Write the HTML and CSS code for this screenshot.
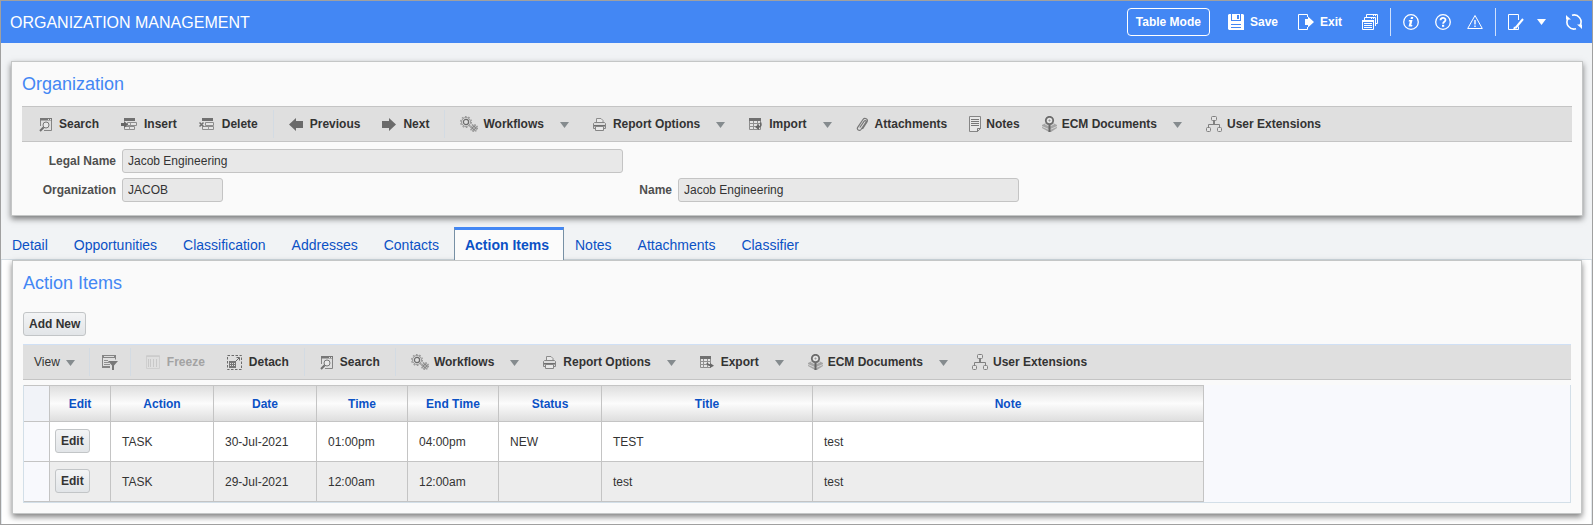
FILE: index.html
```html
<!DOCTYPE html>
<html lang="en">
<head>
    <meta charset="UTF-8">
    <meta name="viewport" content="width=device-width, initial-scale=1.0">
    <title>Organization Management</title>
    <link rel="stylesheet" href="styles.css">
</head>
<body>
    <!-- icon sprite -->
    <svg class="sprite" aria-hidden="true">
        <symbol id="i-search" viewBox="0 0 13 15">
            <path d="M1.5 9V1.5h11v12H5" fill="none" stroke="#858585"/>
            <path d="M1 1h12v2.500H1z" fill="#777"/>
            <path d="M9 2h1v1H9zM11 2h1v1h-1z" fill="#e0e0e0"/>
            <circle cx="7" cy="8" r="3" fill="#e8e8e8" stroke="#777"/>
            <path d="M4.700 10.300L1 14" stroke="#707070" stroke-width="2"/>
        </symbol>
        <symbol id="i-insert" viewBox="0 0 16 14">
            <path d="M3 1h11v3H3z" fill="#707070"/>
            <path d="M6.500 5.500h9v3h-9zM3.500 9.500h10v3h-10z" fill="#e4e4e4" stroke="#8c8c8c"/>
            <path d="M9.500 5.500v3M8.500 9.500v3" stroke="#999"/>
            <path d="M0 6h3V4l4 3.500L3 11V9H0z" fill="#666"/>
        </symbol>
        <symbol id="i-delete" viewBox="0 0 16 14">
            <path d="M3 1h11v3H3z" fill="#707070"/>
            <path d="M6.500 5.500h8v3h-8zM3.500 9.500h11v3h-11z" fill="#e4e4e4" stroke="#8c8c8c"/>
            <path d="M9.500 9.500v3" stroke="#999"/>
            <path d="M.500 5.500l4 4M4.500 5.500l-4 4" stroke="#707070" stroke-width="1.500"/>
        </symbol>
        <symbol id="i-prev" viewBox="0 0 14 13"><path d="M0 6.500L7 0v3h7v7H7v3z" fill="#6b6b6b"/></symbol>
        <symbol id="i-next" viewBox="0 0 14 13"><path d="M14 6.500L7 0v3H0v7h7v3z" fill="#6b6b6b"/></symbol>
        <symbol id="i-gears" viewBox="0 0 18 16">
            <g fill="none" stroke="#999">
                <circle cx="6" cy="6" r="5.400" stroke-width="1.200" stroke-dasharray="1.700 1.690"/>
                <circle cx="6" cy="6" r="4.500"/>
                <circle cx="6" cy="6" r="2.600" stroke="#6b6b6b" stroke-width="1.200"/>
                <circle cx="14" cy="12" r="3.500" stroke-width="1.200" stroke-dasharray="1.400 1.350"/>
                <circle cx="14" cy="12" r="2.800"/>
                <circle cx="14" cy="12" r="1.400" stroke="#6b6b6b"/>
            </g>
        </symbol>
        <symbol id="i-print" viewBox="0 0 13 14">
            <path d="M3.500 5.500V1.500h4.500l2 2V5.500" fill="#e8e8e8" stroke="#8c8c8c"/>
            <path d="M.500 6.500l1-1h10l1 1v5H.500z" fill="#dcdcdc" stroke="#858585"/>
            <path d="M1 8h11v1.500H1z" fill="#707070"/>
            <path d="M2.500 9.500h8v4h-8z" fill="#e8e8e8" stroke="#858585"/>
        </symbol>
        <symbol id="i-import" viewBox="0 0 13 14">
            <path d="M.5 1.500h11v11H.5z" fill="#e4e4e4" stroke="#8c8c8c"/>
            <path d="M0 1h12v3H0z" fill="#707070"/>
            <path d="M4.500 4v9M8.500 4v9M0 6.500h12M0 9.500h12" stroke="#909090"/>
            <path d="M11.500 5.500c1 3 0 4.500-2.500 4.500" fill="none" stroke="#666" stroke-width="1.600"/>
            <path d="M6 10l4-3v6z" fill="#666"/>
        </symbol>
        <symbol id="i-export" viewBox="0 0 14 14">
            <path d="M.5 1.500h10v11H.5z" fill="#e4e4e4" stroke="#8c8c8c"/>
            <path d="M0 1h11v3H0z" fill="#707070"/>
            <path d="M3.500 4v9M7.500 4v9M0 6.500h11M0 9.500h11" stroke="#909090"/>
            <path d="M7 8c1 2 2 2.500 4 2.500" fill="none" stroke="#666" stroke-width="1.600"/>
            <path d="M10 8l4 2.800-4 2.200z" fill="#666"/>
        </symbol>
        <symbol id="i-clip" viewBox="0 0 12 15">
            <path d="M3.800 10.500L8.200 4.200c1-1.400 2.600-.2 1.700 1.100L5 12.500c-1.500 2-4.800.2-3.300-2.200L7 2.500C8.600.2 12.600 2 11 5L6.500 12" fill="none" stroke="#777" stroke-width="1.200"/>
        </symbol>
        <symbol id="i-notes" viewBox="0 0 12 16">
            <path d="M.5.5h11v12l-3 3h-8z" fill="#e8e8e8" stroke="#858585"/>
            <path d="M2 3.500h8M2 5.500h8M2 7.500h8M2 9.500h8" stroke="#777"/>
            <path d="M8.500 15.500v-3h3" fill="none" stroke="#777"/>
        </symbol>
        <symbol id="i-ecm" viewBox="0 0 15 16">
            <path d="M0 9l4-2 3.500 2.500L11 7l4 2v3l-6 4H7l-7-4z" fill="#a5a5a5"/>
            <path d="M0 10.500l7 3M15 10.500l-7 3M3 8l4 2M12 8l-4 2" stroke="#d4d4d4"/>
            <path d="M7.500 8v8" stroke="#666" stroke-width="2"/>
            <circle cx="7.500" cy="4.500" r="3.700" fill="#e4e4e4" stroke="#6b6b6b" stroke-width="1.800"/>
            <path d="M7.500 3.500v2M6.500 4.500h2" stroke="#999"/>
        </symbol>
        <symbol id="i-tree" viewBox="0 0 16 16">
            <g fill="#e4e4e4" stroke="#808080">
                <path d="M8 5v3.500" stroke-width="2"/>
                <path d="M2.500 12V8.500h11V12" fill="none"/>
                <rect x="5.500" y=".5" width="5" height="4" rx="1"/>
                <rect x=".5" y="11.500" width="4" height="4" rx="1"/>
                <rect x="11.500" y="11.500" width="4" height="4" rx="1"/>
            </g>
        </symbol>
        <symbol id="i-caret" viewBox="0 0 9 6"><path d="M0 0h9L4.500 6z" fill="currentColor"/></symbol>
        <symbol id="i-filter" viewBox="0 0 16 15">
            <path d="M.5 .5h13v4M.5 .5v12H8" fill="none" stroke="#858585"/>
            <path d="M0 0h14v3H0zM0 11h8v2H0z" fill="#858585"/>
            <path d="M2 1.500h10" stroke="#ddd"/>
            <path d="M2 5.500h4M2 7.500h5M2 9.500h6" stroke="#909090"/>
            <path d="M6 6h10l-4 4.500V15h-2v-4.500z" fill="#777"/>
        </symbol>
        <symbol id="i-freeze" viewBox="0 0 14 14">
            <path d="M.5 .5h13v13H.5z" fill="none" stroke="#cfcfcf"/>
            <path d="M0 1.500h14" stroke="#ccc"/>
            <path d="M2.500 4v8M4.500 4v8M7.500 4v8M10.500 4v8" stroke="#c8c8c8"/>
        </symbol>
        <symbol id="i-detach" viewBox="0 0 15 15">
            <path d="M.5 .5h14v14H.5z" fill="none" stroke="#6b6b6b" stroke-dasharray="2.500 1.500"/>
            <path d="M2 6h7v7H2z" fill="#777"/>
            <path d="M3 8.500h5M3 10.500h5" stroke="#e0e0e0" stroke-dasharray="1 1"/>
            <path d="M8.500 6.500l3.500-3.500M9.500 2.500h3v3" fill="none" stroke="#6b6b6b"/>
        </symbol>
        <symbol id="i-save" viewBox="0 0 16 16">
            <path d="M0 1l1-1h14l1 1v15H1l-1-1z" fill="#fff"/>
            <path d="M3 0h10v7H3z" fill="#4387f4"/>
            <path d="M4 0h8v6H4z" fill="#fff"/>
            <path d="M9 1h2v4H9zM3 10h10v1H3zM3 13h10v1H3z" fill="#4387f4"/>
        </symbol>
        <symbol id="i-exit" viewBox="0 0 16 16">
            <path d="M9.500 3v-2.500H.5v15h9V13" fill="none" stroke="#fff"/>
            <path d="M7 5h3V2.500l6 5.500-6 5.500V11H7z" fill="#fff"/>
        </symbol>
        <symbol id="i-windows" viewBox="0 0 16 16">
            <path d="M4.500 3V.500h11v9H14M2.500 6V3.500h11v8.500" fill="none" stroke="#fff"/>
            <path d="M11 1h1v1h-1zM13 1h1v1h-1zM9 4h1v1H9zM11 4h1v1h-1z" fill="#fff"/>
            <path d="M.500 6.500h11v9H.500z" fill="none" stroke="#fff"/>
            <path d="M0 6h12v2H0z" fill="#fff"/>
            <path d="M2 9.500h8M2 11.500h8M2 13.500h8" stroke="#fff"/>
        </symbol>
        <symbol id="i-info" viewBox="0 0 16 16">
            <circle cx="8" cy="8" r="7.300" fill="none" stroke="#fff" stroke-width="1.300"/>
            <path d="M8 3h2.300l-.5 2H7.500zM6 6h3.500L8.300 11h1.200l-.5 1.500H5.500L6.800 7.500H5.600z" fill="#fff"/>
        </symbol>
        <symbol id="i-help" viewBox="0 0 16 16">
            <circle cx="8" cy="8" r="7.300" fill="none" stroke="#fff" stroke-width="1.300"/>
            <path d="M5.500 6.300c0-3.300 5-3.200 5-.3 0 1.800-2.400 1.700-2.400 3.700" fill="none" stroke="#fff" stroke-width="1.800"/>
            <path d="M7 10.800h2.200v2H7z" fill="#fff"/>
        </symbol>
        <symbol id="i-warn" viewBox="0 0 16 16">
            <path d="M8 1.500L15.300 14.500H.7z" fill="none" stroke="#fff"/>
            <path d="M7.300 6h1.400v4.500H7.300zM7.300 11.500h1.400V13H7.300z" fill="#fff"/>
        </symbol>
        <symbol id="i-edit" viewBox="0 0 16 16">
            <path d="M10.500 6V.5H.5v15h10v-3" fill="none" stroke="#fff"/>
            <path d="M15 5l-7.500 9" stroke="#fff" stroke-width="2"/>
            <path d="M5 16l1-3.500L8.500 14z" fill="#fff"/>
        </symbol>
        <symbol id="i-refresh" viewBox="0 0 16 16">
            <path d="M6 1.200A7 7 0 0 1 14 11.500M10 14.800A7 7 0 0 1 2 4.500" fill="none" stroke="#fff" stroke-width="1.600"/>
            <path d="M11 10.500h5V15l-1.500-1.500zM5 5.500H0V1l1.500 1.500z" fill="#fff"/>
        </symbol>
    </svg>

    <header class="app-bar">
        <h1>ORGANIZATION MANAGEMENT</h1>
        <div class="app-actions">
            <button class="mode-btn">Table Mode</button>
            <button><svg width="16" height="16"><use href="#i-save"/></svg>Save</button>
            <button><svg width="16" height="16"><use href="#i-exit"/></svg>Exit</button>
            <button class="last" aria-label="Windows"><svg width="16" height="16"><use href="#i-windows"/></svg></button>
            <span class="divider"></span>
            <button class="round" aria-label="Info"><svg width="16" height="16"><use href="#i-info"/></svg></button>
            <button class="round" aria-label="Help"><svg width="16" height="16"><use href="#i-help"/></svg></button>
            <button class="last" aria-label="Warnings"><svg width="16" height="16"><use href="#i-warn"/></svg></button>
            <span class="divider"></span>
            <button class="edit-menu" aria-label="Customize"><svg width="16" height="16"><use href="#i-edit"/></svg><svg class="caret" width="9" height="6"><use href="#i-caret"/></svg></button>
            <button aria-label="Refresh"><svg width="16" height="16"><use href="#i-refresh"/></svg></button>
        </div>
    </header>

    <main>
        <section class="panel">
            <h2>Organization</h2>
            <div class="toolbar main-toolbar">
                <button><svg width="13" height="15"><use href="#i-search"/></svg>Search</button>
                <button><svg width="16" height="14"><use href="#i-insert"/></svg>Insert</button>
                <button><svg width="16" height="14"><use href="#i-delete"/></svg>Delete</button>
                <span class="sep"></span>
                <button><svg width="14" height="13"><use href="#i-prev"/></svg>Previous</button>
                <button><svg width="14" height="13"><use href="#i-next"/></svg>Next</button>
                <span class="sep"></span>
                <button class="menu tight"><svg width="18" height="16"><use href="#i-gears"/></svg>Workflows<svg class="caret" width="9" height="6"><use href="#i-caret"/></svg></button>
                <button class="menu"><svg width="13" height="14"><use href="#i-print"/></svg>Report Options<svg class="caret" width="9" height="6"><use href="#i-caret"/></svg></button>
                <button class="menu"><svg width="13" height="14"><use href="#i-import"/></svg>Import<svg class="caret" width="9" height="6"><use href="#i-caret"/></svg></button>
                <button><svg width="12" height="15"><use href="#i-clip"/></svg>Attachments</button>
                <button class="tight"><svg width="12" height="16"><use href="#i-notes"/></svg>Notes</button>
                <button class="menu tight"><svg width="15" height="16"><use href="#i-ecm"/></svg>ECM Documents<svg class="caret" width="9" height="6"><use href="#i-caret"/></svg></button>
                <button class="tight"><svg width="16" height="16"><use href="#i-tree"/></svg>User Extensions</button>
            </div>
            <form class="fields">
                <label for="legal-name">Legal Name</label>
                <input type="text" id="legal-name" class="wide" value="Jacob Engineering" readonly>
                <label for="org-code">Organization</label>
                <input type="text" id="org-code" class="code" value="JACOB" readonly>
                <label for="org-name">Name</label>
                <input type="text" id="org-name" value="Jacob Engineering" readonly>
            </form>
        </section>

        <nav class="tabs">
            <a href="#">Detail</a>
            <a href="#">Opportunities</a>
            <a href="#">Classification</a>
            <a href="#">Addresses</a>
            <a href="#">Contacts</a>
            <a href="#" class="active">Action Items</a>
            <a href="#">Notes</a>
            <a href="#">Attachments</a>
            <a href="#">Classifier</a>
        </nav>

        <div class="tab-content">
            <section class="panel">
                <h2>Action Items</h2>
                <button class="btn add-new">Add New</button>
                <div class="toolbar table-toolbar">
                    <button class="menu view">View<svg class="caret" width="9" height="6"><use href="#i-caret"/></svg></button>
                    <span class="sep sep-near"></span>
                    <button aria-label="Query by example"><svg width="16" height="15"><use href="#i-filter"/></svg></button>
                    <span class="sep sep-near"></span>
                    <button class="freeze" disabled><svg width="14" height="14"><use href="#i-freeze"/></svg>Freeze</button>
                    <button><svg width="15" height="15"><use href="#i-detach"/></svg>Detach</button>
                    <span class="sep"></span>
                    <button><svg width="13" height="15"><use href="#i-search"/></svg>Search</button>
                    <span class="sep"></span>
                    <button class="menu tight"><svg width="18" height="16"><use href="#i-gears"/></svg>Workflows<svg class="caret" width="9" height="6"><use href="#i-caret"/></svg></button>
                    <button class="menu"><svg width="13" height="14"><use href="#i-print"/></svg>Report Options<svg class="caret" width="9" height="6"><use href="#i-caret"/></svg></button>
                    <button class="menu"><svg width="14" height="14"><use href="#i-export"/></svg>Export<svg class="caret" width="9" height="6"><use href="#i-caret"/></svg></button>
                    <button class="menu tight"><svg width="15" height="16"><use href="#i-ecm"/></svg>ECM Documents<svg class="caret" width="9" height="6"><use href="#i-caret"/></svg></button>
                    <button class="tight"><svg width="16" height="16"><use href="#i-tree"/></svg>User Extensions</button>
                </div>
                <div class="table-wrap">
                    <table>
                        <colgroup>
                            <col class="c-row"><col class="c-edit"><col class="c-mid"><col class="c-mid"><col class="c-time"><col class="c-time"><col class="c-mid"><col class="c-title"><col class="c-note">
                        </colgroup>
                        <thead>
                            <tr><td class="row-head"></td><th>Edit</th><th>Action</th><th>Date</th><th>Time</th><th>End Time</th><th>Status</th><th>Title</th><th>Note</th></tr>
                        </thead>
                        <tbody>
                            <tr>
                                <td class="row-head"></td>
                                <td class="edit-cell"><button class="btn">Edit</button></td>
                                <td>TASK</td><td>30-Jul-2021</td><td>01:00pm</td><td>04:00pm</td><td>NEW</td><td>TEST</td><td>test</td>
                            </tr>
                            <tr>
                                <td class="row-head"></td>
                                <td class="edit-cell"><button class="btn">Edit</button></td>
                                <td>TASK</td><td>29-Jul-2021</td><td>12:00am</td><td>12:00am</td><td></td><td>test</td><td>test</td>
                            </tr>
                        </tbody>
                    </table>
                </div>
            </section>
        </div>
    </main>
</body>
</html>
```
FILE: styles.css
```css
* {
    box-sizing: border-box;
}

body {
    display: flex;
    flex-direction: column;
    min-height: 100vh;
    margin: 0;
    border: 1px solid #a0a0a0;
    background-color: #f1f3f5;
    color: #333;
    font-family: "Liberation Sans", Arial, sans-serif;
    font-size: 12px;
}

button,
input {
    font-family: inherit;
    font-size: 12px;
    color: #333;
}

.sprite {
    display: none;
}

/* Top bar */
.app-bar {
    display: flex;
    justify-content: space-between;
    align-items: center;
    height: 42px;
    padding: 0 10px 0 9px;
    background-color: #4387f4;
}

.app-bar h1 {
    margin: 0;
    padding-top: 2px;
    color: #fff;
    font-size: 16px;
    font-weight: normal;
}

.app-actions {
    display: flex;
    align-items: center;
}

.app-actions button {
    display: flex;
    align-items: center;
    gap: 6px;
    margin-right: 20px;
    padding: 0;
    border: none;
    background: none;
    color: #fff;
    font-weight: bold;
    cursor: pointer;
}

.app-actions .mode-btn {
    height: 28px;
    margin-right: 18px;
    padding: 0 8px;
    border: 1px solid #fff;
    border-radius: 4px;
}

.app-actions .round {
    margin-right: 16px;
}

.app-actions .last {
    margin-right: 12px;
}

.app-actions .edit-menu {
    gap: 13px;
}

.app-actions button:last-child {
    margin-right: 0;
}

.divider {
    width: 1px;
    height: 28px;
    margin-right: 12px;
    background-color: #cfe0fc;
}

main {
    display: flex;
    flex-direction: column;
    flex: 1;
    padding-top: 18px;
}

/* Panels */
.panel {
    margin: 0 9px 0 10px;
    padding: 11px 10px 10px;
    border: 1px solid #c4c6c6;
    background-color: #fafafa;
    box-shadow: 0 3px 6px rgba(0, 0, 0, 0.5);
}

.panel h2 {
    margin: 0 0 11px;
    color: #4387f4;
    font-size: 18px;
    font-weight: normal;
    line-height: 22px;
}

/* Toolbars */
.toolbar {
    display: flex;
    align-items: center;
    height: 36px;
    border-top: 1px solid #c4c4c4;
    border-bottom: 1px solid #c4c4c4;
    background-color: #dfdfdf;
}

.main-toolbar {
    padding-left: 6px;
}

.table-toolbar {
    margin: 8px 0 5px;
    border-top-color: #d0e0f5;
}

.toolbar button {
    display: flex;
    align-items: center;
    gap: 7px;
    height: 100%;
    padding: 0 11px;
    border: none;
    background: none;
    font-weight: bold;
    white-space: nowrap;
    cursor: pointer;
}

.toolbar .tight {
    gap: 5px;
}

.toolbar .menu {
    padding-right: 13px;
}

.toolbar .caret {
    margin: 2px 0 0 9px;
    color: #858b8e;
}

.toolbar .tight .caret {
    margin-left: 11px;
}

.toolbar .view {
    gap: 6px;
    font-weight: normal;
}

.toolbar .view .caret {
    margin-left: 0;
}

.toolbar .freeze {
    padding-left: 14px;
    color: #a3a3a3;
}

.sep {
    width: 1px;
    height: 28px;
    margin: 0 4px;
    background-color: #d3dbe3;
}

.sep-near {
    margin: 0 1px;
}

/* Form fields */
.fields {
    display: grid;
    grid-template-columns: 94px 501px 43px 341px;
    gap: 5px 6px;
    align-items: center;
    margin: 7px 0 3px;
}

.fields label {
    color: #4f4f4f;
    font-weight: bold;
    text-align: right;
}

.fields input {
    width: 100%;
    height: 24px;
    padding: 0 5px;
    border: 1px solid #c4c4c4;
    border-radius: 3px;
    background-color: #e8e8e8;
}

.fields .wide {
    grid-column: 2 / 3;
}

.fields label[for="org-code"] {
    grid-column: 1;
}

.fields .code {
    width: 101px;
}

/* Tabs */
.tabs {
    display: flex;
    height: 33px;
    margin-top: 11px;
    border-bottom: 1px solid #d3dce3;
}

.tabs a {
    padding: 0 15px 0 11px;
    color: #0b51c5;
    font-size: 14px;
    line-height: 36px;
    text-decoration: none;
}

.tabs .active {
    position: relative;
    height: 33px;
    padding: 0 14px 0 10px;
    border: 1px solid #7790a5;
    border-top: 3px solid #4387f4;
    border-bottom: none;
    background-color: #fbfbfb;
    font-weight: bold;
    line-height: 30px;
}

.tab-content {
    flex: 1;
    padding-bottom: 10px;
    border: solid #e3e8ec;
    border-width: 0 1px;
    background-color: #fff;
}

/* Buttons */
.btn {
    height: 24px;
    padding: 0 5px;
    border: 1px solid #c2c5c7;
    border-radius: 3px;
    background: linear-gradient(#f3f4f5, #e2e5e8);
    font-weight: bold;
    cursor: pointer;
}

.add-new {
    display: block;
    margin-top: 18px;
}

/* Table */
.table-wrap {
    border: 1px solid #d3dfe8;
    border-top: none;
    background-color: #f8f9fd;
}

table {
    width: 1180px;
    table-layout: fixed;
    border-collapse: separate;
    border-spacing: 0;
}

.c-row {
    width: 26px;
}

.c-edit {
    width: 61px;
}

.c-mid {
    width: 103px;
}

.c-time {
    width: 91px;
}

.c-title {
    width: 211px;
}

.c-note {
    width: 391px;
}

th,
td {
    border-right: 1px solid #c4c4c4;
    border-bottom: 1px solid #c4c4c4;
}

th {
    height: 37px;
    padding: 0;
    border-top: 1px solid #c4c4c4;
    background: linear-gradient(#dedede, #fcfcfc 50%, #dedede);
    color: #0b51c5;
}

td {
    height: 40px;
    padding: 0 11px;
    background-color: #fff;
}

tbody tr:nth-child(2) td {
    background-color: #ededed;
}

thead .row-head {
    height: 37px;
    border-top: 1px solid #c4c4c4;
    background-color: #f1f3f8;
}

tbody tr .row-head,
tbody tr:nth-child(2) .row-head {
    background-color: #f8f9fd;
}

td.edit-cell {
    padding: 0 5px 2px;
}
```
